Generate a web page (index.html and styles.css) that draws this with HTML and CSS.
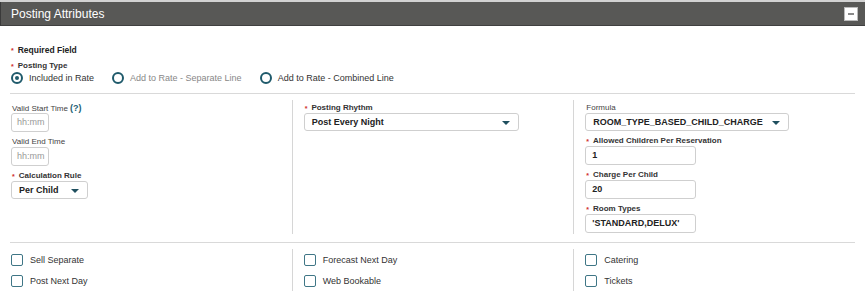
FILE: index.html
```html
<!DOCTYPE html>
<html lang="en">
<head>
    <meta charset="UTF-8">
    <meta name="viewport" content="width=device-width, initial-scale=1.0">
    <title>Posting Attributes</title>
    <link rel="stylesheet" href="styles.css">
</head>
<body>
    <div class="panel">
        <div class="panel-header">
            <span class="panel-title">Posting Attributes</span>
            <span class="collapse-btn"><span class="minus"></span></span>
        </div>

        <div class="panel-body">
            <div class="required-note"><span class="star">*</span>Required Field</div>

            <!-- Posting type -->
            <div class="label req"><span class="star">*</span>Posting Type</div>
            <div class="radio-row">
                <label class="radio checked"><span class="circle"></span>Included in Rate</label>
                <label class="radio muted"><span class="circle"></span>Add to Rate - Separate Line</label>
                <label class="radio"><span class="circle"></span>Add to Rate - Combined Line</label>
            </div>

            <div class="rule"></div>

            <div class="columns">
                <div class="col">
                    <div class="field">
                        <div class="label">Valid Start Time <span class="help">(?)</span></div>
                        <div class="input time placeholder">hh:mm</div>
                    </div>
                    <div class="field">
                        <div class="label">Valid End Time</div>
                        <div class="input time placeholder">hh:mm</div>
                    </div>
                    <div class="field">
                        <div class="label req"><span class="star">*</span>Calculation Rule</div>
                        <div class="select short">Per Child<span class="arrow"></span></div>
                    </div>
                </div>
                <div class="col">
                    <div class="field">
                        <div class="label req"><span class="star">*</span>Posting Rhythm</div>
                        <div class="select wide">Post Every Night<span class="arrow"></span></div>
                    </div>
                </div>
                <div class="col">
                    <div class="field">
                        <div class="label">Formula</div>
                        <div class="select formula">ROOM_TYPE_BASED_CHILD_CHARGE<span class="arrow"></span></div>
                    </div>
                    <div class="field">
                        <div class="label req"><span class="star">*</span>Allowed Children Per Reservation</div>
                        <div class="input mid">1</div>
                    </div>
                    <div class="field">
                        <div class="label req"><span class="star">*</span>Charge Per Child</div>
                        <div class="input mid">20</div>
                    </div>
                    <div class="field">
                        <div class="label req"><span class="star">*</span>Room Types</div>
                        <div class="input mid">'STANDARD,DELUX'</div>
                    </div>
                </div>
            </div>

            <div class="rule bottom-rule"></div>

            <div class="columns checks">
                <div class="col">
                    <label class="check"><span class="box"></span>Sell Separate</label>
                    <label class="check"><span class="box"></span>Post Next Day</label>
                </div>
                <div class="col">
                    <label class="check"><span class="box"></span>Forecast Next Day</label>
                    <label class="check"><span class="box"></span>Web Bookable</label>
                </div>
                <div class="col">
                    <label class="check"><span class="box"></span>Catering</label>
                    <label class="check"><span class="box"></span>Tickets</label>
                </div>
            </div>
        </div>
    </div>
</body>
</html>
```

FILE: styles.css
```css
body {
    margin: 0;
    padding: 0;
    font-family: "Liberation Sans", Arial, sans-serif;
    color: #222;
    background: #fff;
}
.panel {
    border-top: 2px solid #d2d2d2;
}
.panel-header {
    height: 23px;
    background-color: #585856;
    border-bottom: 1px solid #404040;
    border-left: 1px solid #3a3a3a;
    padding: 0 7px 0 10px;
    display: flex;
    align-items: center;
    justify-content: space-between;
}
.panel-title {
    color: #fff;
    font-size: 12px;
}
.collapse-btn {
    width: 12px;
    height: 12px;
    background: #fff;
    border: 1px solid #bbb;
    display: flex;
    align-items: center;
    justify-content: center;
}
.collapse-btn .minus {
    width: 6px;
    height: 2px;
    background: #8a8a8a;
}
.panel-body {
    padding: 18px 10px 0 10px;
}
.required-note {
    font-size: 8.5px;
    font-weight: bold;
    line-height: 12px;
    height: 12px;
    overflow: hidden;
    padding-left: 1px;
    margin-bottom: 3px;
}
.star {
    color: #d0312d;
    font-size: 7px;
    font-weight: bold;
    line-height: 1;
    margin-right: 4px;
    vertical-align: top;
    position: relative;
    top: 3px;
}
.label {
    font-size: 8px;
    line-height: 14px;
    height: 12px;
    overflow: hidden;
    color: #444;
    padding-left: 1px;
}
.label .star {
    top: 4px;
}
.label.req {
    font-weight: bold;
    color: #333;
}
.help {
    color: #1d5f74;
    font-weight: bold;
    font-size: 9px;
}
.radio-row {
    display: flex;
    gap: 18px;
    height: 14px;
    align-items: center;
    padding-left: 1px;
}
.radio {
    display: flex;
    align-items: center;
    gap: 6px;
    font-size: 9px;
    color: #333;
}
.radio.muted {
    color: #888;
}
.radio .circle {
    width: 8px;
    height: 8px;
    border: 2px solid #1f5a6b;
    border-radius: 50%;
    display: flex;
    align-items: center;
    justify-content: center;
}
.radio.checked .circle::after {
    content: "";
    width: 4px;
    height: 4px;
    border-radius: 50%;
    background: #1f5a6b;
}
.rule {
    height: 1px;
    background: #d9d9d9;
    margin-top: 8px;
}
.columns {
    display: grid;
    grid-template-columns: 1fr 1fr 1fr;
    margin-top: 6px;
}
.col {
    padding: 1px 0 1px 1px;
}
.col + .col {
    border-left: 1px solid #d6d6d6;
    padding-left: 11px;
}
.field {
    margin-bottom: 3px;
}
.field:last-child {
    margin-bottom: 0;
}
.input, .select {
    box-sizing: border-box;
    height: 19px;
    border: 1px solid #cfcfcf;
    border-radius: 3px;
    font-size: 9px;
    font-weight: bold;
    line-height: 17px;
    padding-left: 6px;
    color: #222;
    background: #fff;
}
.input.placeholder {
    color: #999;
    font-weight: normal;
    padding-left: 5px;
}
.input.time {
    width: 38px;
}
.input.mid {
    width: 111px;
}
.select {
    position: relative;
    height: 18px;
    line-height: 16px;
    padding-left: 7px;
}
.select.short {
    width: 77px;
}
.select.wide {
    width: 215px;
}
.select.formula {
    width: 204px;
}
.select .arrow {
    position: absolute;
    right: 8px;
    top: 7px;
    width: 0;
    height: 0;
    border-left: 4px solid transparent;
    border-right: 4px solid transparent;
    border-top: 4px solid #1f4f5e;
}
.bottom-rule {
    margin-top: 8px;
}
.checks {
    margin-top: 6px;
}
.checks .col {
    padding-top: 0;
    padding-bottom: 0;
}
.check {
    display: flex;
    align-items: center;
    gap: 7px;
    height: 21px;
    font-size: 9px;
    color: #333;
}
.check .box {
    box-sizing: border-box;
    width: 12px;
    height: 12px;
    border: 1.5px solid #3f7686;
    border-radius: 2px;
}
```
